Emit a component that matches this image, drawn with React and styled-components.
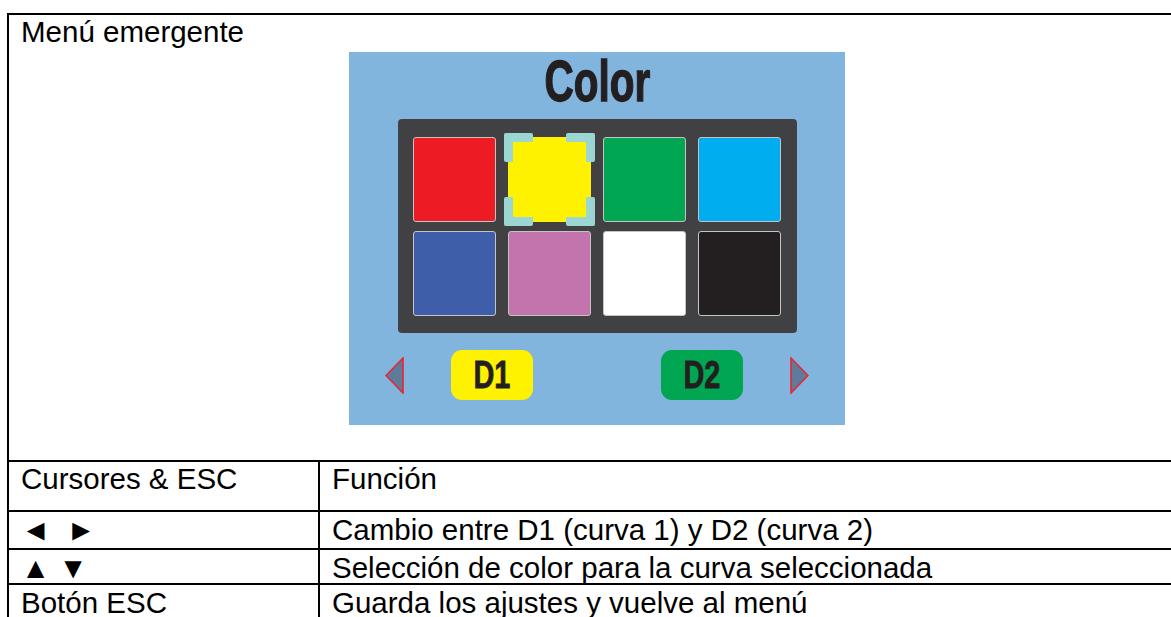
import React from 'react';
import styled, {createGlobalStyle} from 'styled-components';

const GlobalStyle = createGlobalStyle`
  html, body {
    margin: 0;
    padding: 0;
    background: #fff;
    overflow: hidden;
  }
  body {
    font-family: "Liberation Sans", Arial, sans-serif;
    color: #000;
  }
`;

const swatches = [
  {id: 'red', color: '#ed1c24'},
  {id: 'yellow', color: '#fff200', selected: true},
  {id: 'green', color: '#00a651'},
  {id: 'cyan', color: '#00aeef'},
  {id: 'blue', color: '#3f5eaa'},
  {id: 'pink', color: '#c474ac'},
  {id: 'white', color: '#ffffff'},
  {id: 'black', color: '#231f20'},
];

const rows = [
  {id: 'lr', keys: '◄  ►', text: 'Cambio entre D1 (curva 1) y D2 (curva 2)', height: 38},
  {id: 'ud', keys: '▲ ▼', text: 'Selección de color para la curva seleccionada', height: 35},
  {id: 'esc', keys: 'Botón ESC', text: 'Guarda los ajustes y vuelve al menú', height: 35},
];

function Arrow({dir}) {
  const points = dir === 'left' ? '18,1 1,18.5 18,36' : '1,1 18,18.5 1,36';
  return (
    <svg width="19" height="37" viewBox="0 0 19 37">
      <polygon points={points} fill="#5f7b9c" stroke="#e8262f" strokeWidth="1.6" strokeLinejoin="miter" />
    </svg>
  );
}

function ColorMenu() {
  return (
    <Styled.Screen>
      <Styled.Title><span>Color</span></Styled.Title>
      <Styled.Palette>
        {swatches.map(s => (
          <Styled.Swatch key={s.id} fill={s.color} selected={s.selected}>
            {s.selected && (
              <>
                <Styled.Corner pos="tl" />
                <Styled.Corner pos="tr" />
                <Styled.Corner pos="bl" />
                <Styled.Corner pos="br" />
              </>
            )}
          </Styled.Swatch>
        ))}
      </Styled.Palette>
      <Styled.Channels>
        <Arrow dir="left" />
        <Styled.Channel bg="#fff200"><span>D1</span></Styled.Channel>
        <Styled.Channel bg="#00a651" push><span>D2</span></Styled.Channel>
        <Arrow dir="right" />
      </Styled.Channels>
    </Styled.Screen>
  );
}

export default function App() {
  return (
    <>
      <GlobalStyle />
      <Styled.Frame>
        <Styled.Cell span h={447}>
          Menú emergente
          <ColorMenu />
        </Styled.Cell>
        <Styled.Cell h={50}>Cursores &amp; ESC</Styled.Cell>
        <Styled.Cell h={50}>Función</Styled.Cell>
        {rows.map(r => (
          <React.Fragment key={r.id}>
            <Styled.Cell h={r.height} center keep>{r.keys}</Styled.Cell>
            <Styled.Cell h={r.height} center>{r.text}</Styled.Cell>
          </React.Fragment>
        ))}
      </Styled.Frame>
    </>
  );
}

const cornerPlace = {
  tl: 'top: -5px; left: -5px; border-width: 9px 0 0 9px;',
  tr: 'top: -5px; right: -5px; border-width: 9px 9px 0 0;',
  bl: 'bottom: -5px; left: -5px; border-width: 0 0 9px 9px;',
  br: 'bottom: -5px; right: -5px; border-width: 0 9px 9px 0;',
};

const Styled = {
  Frame: styled.div`
    display: grid;
    grid-template-columns: 311px 1fr;
    width: 1178px;
    margin: 13px 0 0 7px;
    border-left: 2px solid #000;
    border-top: 2px solid #000;
    font-size: 29.5px;
    line-height: 33px;
  `,
  Cell: styled.div`
    box-sizing: border-box;
    grid-column: ${props => props.span ? '1 / span 2' : 'auto'};
    height: ${props => props.h}px;
    padding: ${props => props.center ? '1px' : '0'} 12px 0;
    border-right: 2px solid #000;
    border-bottom: 2px solid #000;
    white-space: ${props => props.keep ? 'pre' : 'nowrap'};
  `,
  Screen: styled.div`
    display: flex;
    flex-direction: column;
    align-items: center;
    width: 496px;
    height: 373px;
    margin: 4px auto 0;
    padding-top: 1px;
    box-sizing: border-box;
    background: #82b5de;
    white-space: normal;
  `,
  Title: styled.div`
    height: 56px;
    font-size: 57px;
    line-height: 56px;
    font-weight: 700;
    color: #231f20;

    & > span {
      display: inline-block;
      transform: scaleX(0.71);
      -webkit-text-stroke: 1.4px #231f20;
    }
  `,
  Palette: styled.div`
    display: grid;
    grid-template-columns: repeat(4, 83px);
    grid-auto-rows: 85px;
    column-gap: 12px;
    row-gap: 9px;
    margin-top: 10px;
    padding: 18px 16px 17px 15px;
    background: #414042;
    border-radius: 4px;
  `,
  Swatch: styled.div`
    position: relative;
    box-sizing: border-box;
    background: ${props => props.fill};
    border: 1.5px solid ${props => props.selected ? props.fill : '#c4c4c6'};
    border-radius: 3px;
  `,
  Corner: styled.span`
    position: absolute;
    width: 29px;
    height: 29px;
    box-sizing: border-box;
    border-style: solid;
    border-color: #9cd6d3;
    border-radius: 2px;
    ${props => cornerPlace[props.pos]}
  `,
  Channels: styled.div`
    display: flex;
    align-items: center;
    gap: 47px;
    margin-top: 17px;
  `,
  Channel: styled.div`
    width: 82px;
    height: 50px;
    margin-left: ${props => props.push ? '81px' : '0'};
    border-radius: 11px;
    background: ${props => props.bg};
    text-align: center;
    font-size: 39px;
    line-height: 50px;
    font-weight: 700;
    color: #231f20;

    & > span {
      display: inline-block;
      transform: scaleX(0.74);
      -webkit-text-stroke: 0.8px #231f20;
    }
  `,
};
